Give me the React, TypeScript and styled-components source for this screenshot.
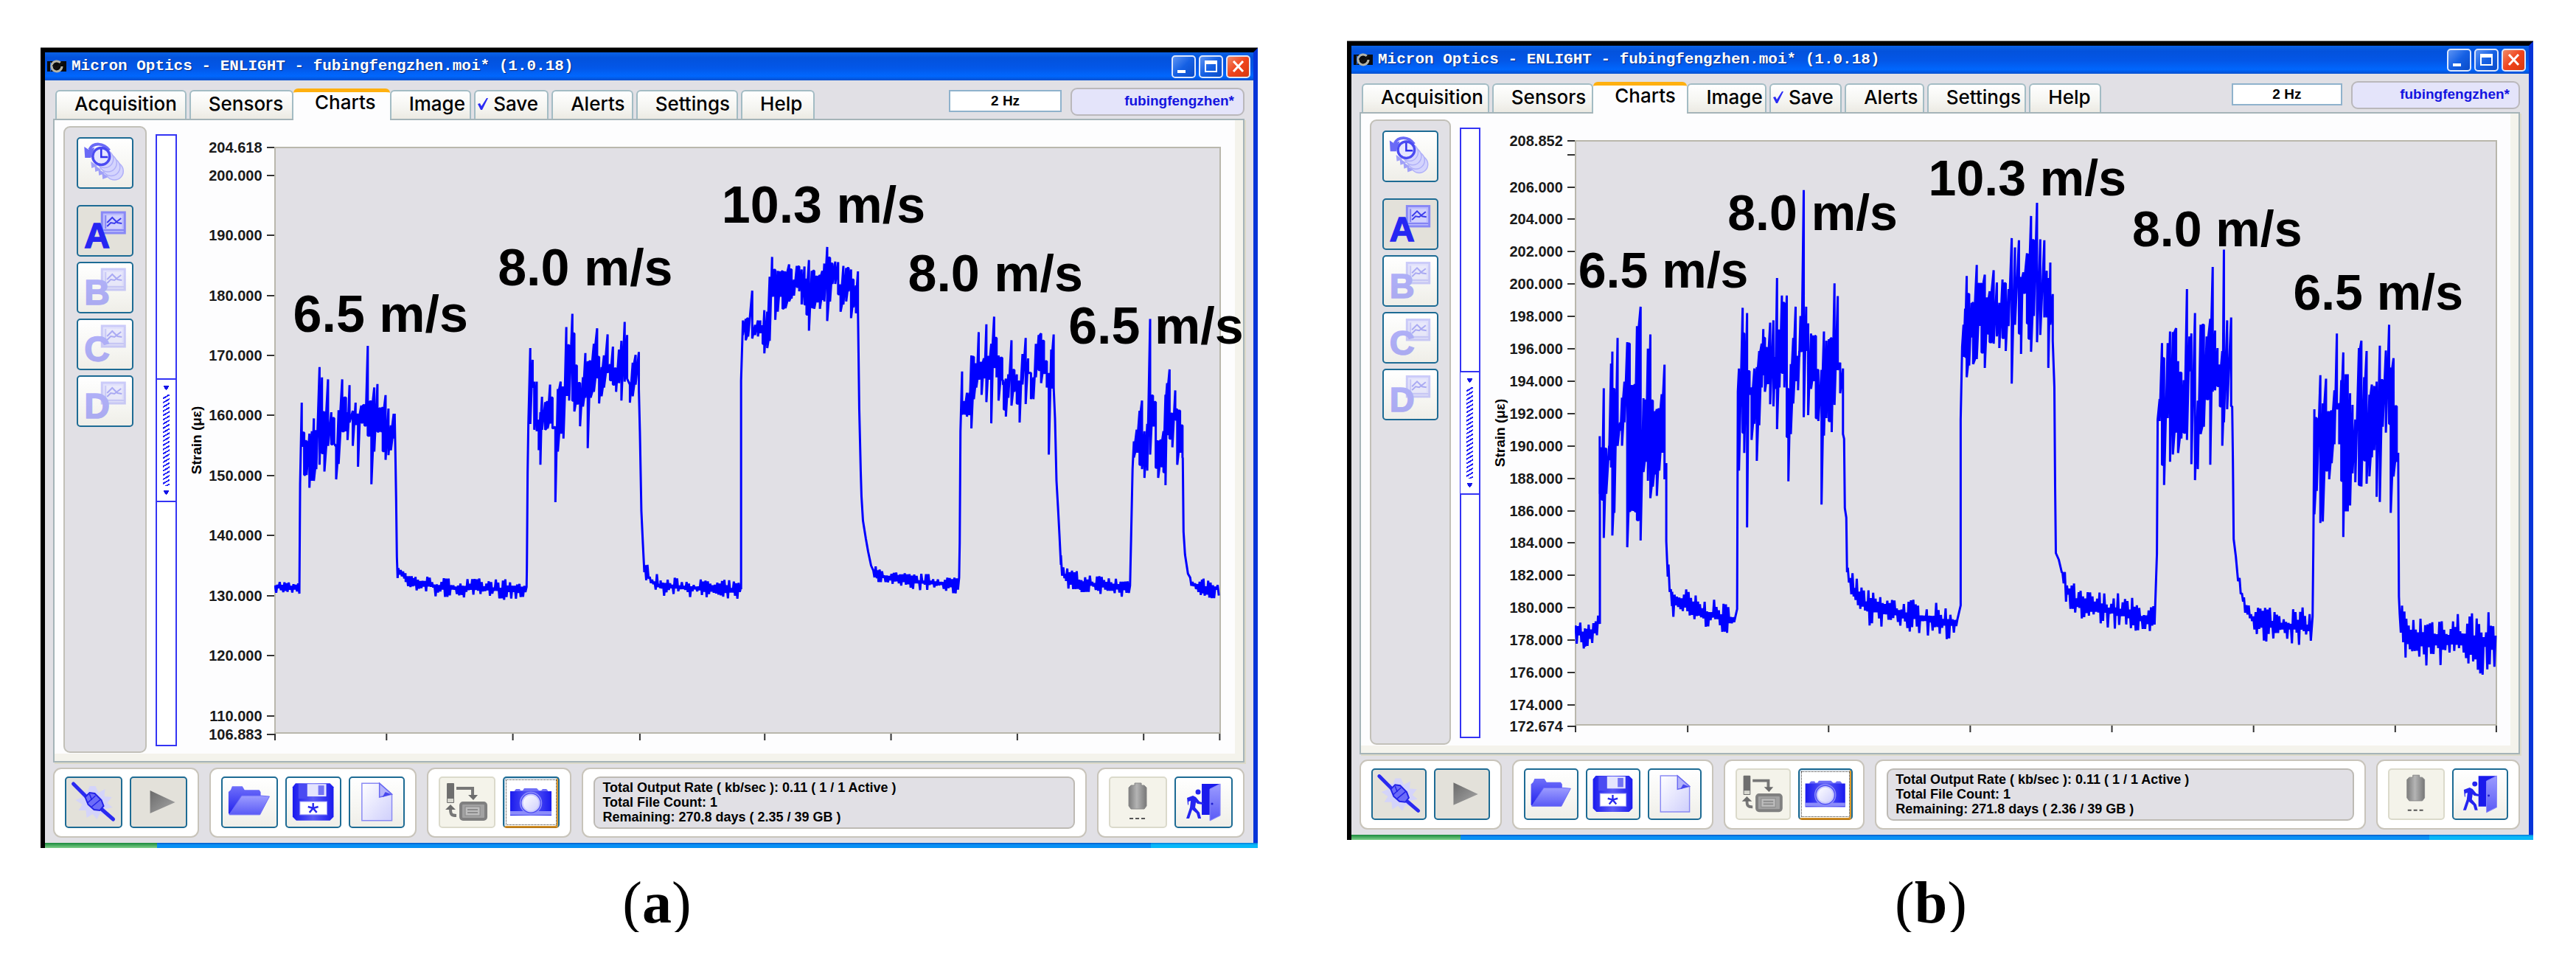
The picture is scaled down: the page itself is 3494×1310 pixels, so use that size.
import React from "react";
import styled, { createGlobalStyle, css } from "styled-components";

/* ---------- trace data ---------- */

type Knot = [number, number, number?];
type Piece =
  | { kind: "line"; at: Knot[] }
  | { kind: "drift"; at: Knot[] }
  | { kind: "burst"; origin: [number, number]; scale: [number, number]; cols: string };

const S = 1.823;
const V = 2.529;

const traceA: Piece[] = [
  { kind: "drift", at: [[373, 794, 6], [390, 796, 6], [407, 798, 5]] },
  { kind: "line", at: [[407, 655]] },
  {
    kind: "burst", origin: [40, 50], scale: [S, V],
    cols: "673 1252 1400,679 1355 1500,685 1384 1500,692 1358 1544,698 1350 1520,703 1306 1520,709 1350 1480,717 1130 1465,723 1165 1425,729 1285 1488,738 1172 1400,746 1285 1395,753 1305 1395,758 1400 1515,764 1278 1462,773 1172 1350,782 1235 1350,786 1285 1380,791 1192 1320,799 1280 1400,806 1252 1325,812 1293 1472,820 1262 1320,828 1260 1330,836 1057 1365,845 1248 1532,852 1200 1420,860 1188 1352,868 1272 1350,873 1268 1418,880 1226 1448,887 1272 1432,893 1330 1415,900 1290 1375",
  },
  { kind: "line", at: [[535, 560], [536, 615], [537, 676], [538, 754], [539, 783]] },
  { kind: "drift", at: [[540, 772, 8], [550, 782, 7], [560, 788, 7], [600, 796, 9], [714, 799, 9]] },
  { kind: "line", at: [[714, 770], [715, 640], [716, 575]] },
  {
    kind: "burst", origin: [40, 50], scale: [S, V],
    cols: "1237 1065 1325,1243 1105 1200,1247 1180 1345,1253 1180 1350,1258 1310 1415,1262 1285 1465,1266 1232 1345,1274 1250 1345,1280 1250 1340,1286 1190 1320,1292 1235 1340,1299 1335 1593,1305 1205 1420,1312 1180 1355,1319 1200 1375,1326 993 1225,1333 1055 1245,1341 947 1245,1346 1015 1282,1352 1125 1255,1360 1185 1333,1367 1165 1265,1373 1082 1235,1379 1110 1408,1386 1110 1235,1394 1050 1215,1402 997 1165,1407 1095 1255,1413 1130 1230,1419 1090 1200,1428 1018 1150,1434 1120 1175,1441 1060 1190,1449 1135 1215,1456 1070 1185,1462 1040 1245,1470 975 1180,1476 1020 1170,1483 1190 1252,1490 1115 1230,1497 1088 1190,1505 1078 1205",
  },
  { kind: "line", at: [[867, 584], [869, 692], [871, 735], [873, 775]] },
  { kind: "drift", at: [[874, 773, 9], [882, 787, 11], [895, 794, 8], [1004, 799, 8]] },
  { kind: "line", at: [[1004, 798], [1004, 515], [1006, 450]] },
  {
    kind: "burst", origin: [860, 50], scale: [S, V],
    cols: "267 970 1020,274 965 1038,280 962 1025,290 868 1032,297 985 1020,304 970 1025,310 970 1010,316 990 1050,320 935 1083,327 940 1065,333 820 1040,339 752 885,347 797 968,353 800 940,359 805 885,365 800 930,372 805 928,381 778 905,387 795 895,393 830 885,400 783 855,406 785 870,412 795 915,419 785 915,424 830 950,430 763 1005,437 800 925,443 800 930,450 820 905,457 815 930,463 800 900,468 775 905,475 718 972,482 755 905,488 775 845,495 768 845,502 770 880,508 850 940,515 783 915,522 790 905,528 790 870,534 795 962,540 830 925,546 850 945,551 802 930",
  },
  { kind: "line", at: [[1164, 554], [1166, 639], [1167, 672], [1169, 705], [1173, 730], [1176, 747], [1180, 766]] },
  { kind: "drift", at: [[1183, 775, 5], [1190, 779, 8], [1216, 786, 7], [1300, 792, 8]] },
  { kind: "line", at: [[1300, 735], [1301, 584]] },
  {
    kind: "burst", origin: [860, 50], scale: [S, V],
    cols: "808 1145 1290,814 1250 1290,820 1218 1300,826 1218 1295,831 1090 1340,837 1095 1240,843 1120 1200,849 1010 1170,856 1115 1225,862 1100 1165,868 983 1250,874 1095 1170,880 1050 1323,887 957 1130,893 1030 1165,898 1090 1245,907 1098 1175,911 1190 1275,916 1170 1300,922 1155 1235,930 1038 1262,937 1140 1215,943 1155 1255,950 1180 1320,957 1085 1190,965 1030 1257,971 1100 1150,978 1150 1240,984 1165 1240,990 1050 1165,997 1020 1140,1003 1015 1185,1010 1040 1150,1017 1110 1200,1022 1150 1430,1028 1070 1200,1034 1018 1200",
  },
  { kind: "line", at: [[1429, 566], [1431, 651], [1433, 686], [1435, 724], [1437, 765]] },
  { kind: "drift", at: [[1437, 764, 9], [1444, 783, 10], [1465, 790, 9], [1531, 796, 9]] },
  { kind: "line", at: [[1532, 730], [1534, 635]] },
  {
    kind: "burst", origin: [860, 50], scale: [S, V],
    cols: "1232 1385 1440,1239 1345 1420,1246 1280 1465,1252 1245 1480,1258 1350 1510,1265 1325 1485,1272 965 1430,1279 1228 1330,1286 1250 1475,1292 1385 1510,1299 1380 1470,1305 1350 1490,1310 1225 1535,1314 1185 1360,1320 1138 1375,1327 1290 1405,1334 1210 1310,1339 1275 1465,1346 1280 1420,1352 1330 1440",
  },
  { kind: "line", at: [[1602, 620], [1603, 720], [1605, 751], [1609, 777]] },
  { kind: "drift", at: [[1612, 790, 6], [1630, 797, 10], [1652, 796, 8]] },
];

const traceB: Piece[] = [
  { kind: "drift", at: [[2137, 850, 14], [2150, 866, 13], [2169, 850, 12]] },
  { kind: "line", at: [[2170, 845], [2170, 700]] },
  {
    kind: "burst", origin: [1810, 40], scale: [S, V],
    cols: "656 1392 1590,661 1430 1610,666 1228 1741,672 1435 1590,679 1425 1475,684 1143 1500,687 1102 1733,692 1230 1655,700 1055 1425,706 1345 1370,711 1260 1425,717 1205 1345,724 1070 1773,730 1075 1650,737 1220 1645,743 1215 1650,748 1015 1680,757 948 1750,764 1262 1515,770 1270 1480,775 1092 1545,781 1043 1605,787 1270 1565,793 1310 1520,797 1300 1597,803 1300 1510,809 1248 1445,816 1147 1540",
  },
  { kind: "line", at: [[2260, 627], [2260, 733], [2262, 781]] },
  { kind: "drift", at: [[2263, 790, 18], [2268, 815, 14], [2287, 818, 14], [2304, 829, 13], [2353, 840, 14]] },
  { kind: "line", at: [[2356, 825], [2357, 530]] },
  {
    kind: "burst", origin: [1810, 40], scale: [S, V],
    cols: "1000 1160 1510,1009 952 1380,1013 1040 1450,1020 970 1705,1026 1170 1250,1031 1225 1405,1038 1160 1350,1044 1155 1477,1050 1100 1355,1056 1075 1225,1060 1025 1180,1064 1055 1240,1070 1090 1210,1077 1003 1283,1085 995 1290,1090 1120 1230,1094 850 1368,1100 1030 1225,1106 910 1175,1112 935 1225,1118 910 1395,1122 1230 1547,1128 1145 1385,1134 1055 1280,1140 948 1200,1146 1120 1235,1152 980 1100,1160 548 1327,1166 948 1100,1171 1005 1320,1178 1040 1230,1184 1050 1200,1190 1048 1330,1196 1165 1340,1204 1165 1627,1210 1033 1390,1216 1065 1330,1222 1060 1340,1229 1055 1378,1236 868 1285,1244 912 1165,1250 1140 1245,1257 1160 1385",
  },
  { kind: "line", at: [[2501, 594], [2502, 688], [2504, 701], [2505, 775]] },
  { kind: "drift", at: [[2506, 779, 9], [2515, 802, 16], [2534, 823, 15], [2605, 837, 15], [2656, 845, 15]] },
  { kind: "line", at: [[2659, 820], [2659, 568], [2661, 469]] },
  {
    kind: "burst", origin: [2640, 40], scale: [1.836, V],
    cols: "42 1010 1120,46 955 1120,50 843 1190,56 905 1150,62 935 1050,66 935 1145,75 805 1128,82 870 1010,87 870 1105,95 838 1158,102 920 1040,107 895 1070,117 823 1075,125 865 1050,131 935 1090,139 855 1055,147 868 1100,154 888 1015,162 713 1212,170 745 1010,180 720 1040,185 850 1110,191 830 900,200 765 1005,204 770 1058,210 637 1103,217 720 980,225 592 1070,233 717 1045,243 720 985,249 825 985,253 850 1158,258 797 1010,264 905 1065",
  },
  { kind: "line", at: [[2786, 524], [2787, 657], [2788, 749], [2792, 758], [2796, 775]] },
  { kind: "drift", at: [[2797, 779, 6], [2803, 800, 14], [2820, 820, 14], [2869, 828, 17], [2923, 843, 15]] },
  { kind: "line", at: [[2925, 750], [2926, 568]] },
  {
    kind: "burst", origin: [2640, 40], scale: [1.836, V],
    cols: "530 1265 1340,536 1073 1490,541 1125 1560,550 1073 1330,556 1033 1480,563 1035 1455,571 1022 1380,576 1135 1450,584 1175 1400,590 1200 1380,598 888 1405,604 1050 1170,609 1040 1488,618 970 1543,625 1270 1505,632 1010 1385,640 1010 1360,647 1050 1265,656 990 1490,662 812 1240,668 1030 1235,674 1090 1220,680 1150 1290,686 1100 1425,690 752 1345,698 995 1300,708 985 1290",
  },
  { kind: "line", at: [[3027, 550], [3028, 625], [3029, 730], [3032, 754], [3035, 787]] },
  { kind: "drift", at: [[3037, 795, 8], [3043, 817, 12], [3054, 838, 15], [3092, 848, 19], [3134, 850, 16]] },
  { kind: "line", at: [[3136, 835], [3137, 741]] },
  {
    kind: "burst", origin: [2640, 40], scale: [1.836, V],
    cols: "915 1300 1660,921 1330 1580,930 1183 1690,936 1280 1685,944 1195 1510,952 1310 1540,958 1305 1485,965 1235 1420,971 1040 1300,977 1280 1420,982 1200 1545,987 1105 1738,993 1180 1650,998 1180 1650,1004 1245 1630,1010 1285 1520,1017 1335 1550,1026 1090 1560,1032 1065 1565,1039 1190 1475,1045 1100 1555,1052 1250 1530,1058 1215 1465,1064 1220 1440,1070 1205 1600,1078 1082 1618,1085 1200 1360,1093 1098 1380,1101 1010 1350,1105 1160 1655,1112 1125 1530,1120 1290 1480",
  },
  { kind: "line", at: [[3252, 613], [3253, 808]] },
  { kind: "drift", at: [[3254, 835, 20], [3263, 865, 22], [3320, 866, 27], [3385, 870, 29]] },
];

function tracePoints(pieces: Piece[]): string {
  let seed = 7;
  const rand = () => {
    seed = (seed * 16807) % 2147483647;
    return seed / 2147483647;
  };
  const out: string[] = [];
  const push = (x: number, y: number) => out.push(`${x.toFixed(1)},${y.toFixed(1)}`);

  for (const piece of pieces) {
    if (piece.kind === "line") {
      piece.at.forEach(([x, y]) => push(x, y));
    } else if (piece.kind === "drift") {
      let up = true;
      for (let i = 0; i < piece.at.length - 1; i++) {
        const [x0, y0, a0 = 6] = piece.at[i];
        const [x1, y1, a1 = 6] = piece.at[i + 1];
        for (let x = x0; x < x1; x += 1.6) {
          const t = (x - x0) / (x1 - x0);
          const amp = (a0 + (a1 - a0) * t) * (0.2 + 1.4 * Math.pow(rand(), 1.5));
          push(x, y0 + (y1 - y0) * t + (up ? -amp : amp));
          up = !up;
        }
      }
    } else {
      const [ox, oy] = piece.origin;
      const [sx, sy] = piece.scale;
      const cols = piece.cols.split(",").map((c) => c.split(" ").map(Number));
      cols.forEach(([x, top, bottom], i) => {
        const px = ox + x / sx;
        push(px, oy + top / sy);
        push(px, oy + bottom / sy);
        const next = cols[i + 1];
        if (next && rand() < 0.6) {
          const mid = ox + (x + next[0]) / 2 / sx;
          const hi = oy + Math.max(top, next[1]) / sy;
          const lo = oy + Math.min(bottom, next[2]) / sy;
          push(mid, lo);
          push(mid, hi);
        }
      });
    }
  }
  return out.join(" ");
}

/* ---------- screens ---------- */

interface Screen {
  caption: string;
  view: [number, number, number, number];
  trace: Piece[];
  range: [number, number];
  ticks: { value: number; label?: string }[];
  xTicks: number[];
  notes: { text: string; x: number; y: number }[];
  noteSize: number;
  remaining: string;
}

const tick = (value: number) => ({ value, label: value.toFixed(3) });

const screens: Screen[] = [
  {
    caption: "a",
    view: [372, 198, 1282, 796],
    trace: traceA,
    range: [106.883, 204.618],
    ticks: [204.618, 200, 190, 180, 170, 160, 150, 140, 130, 120, 110, 106.883].map(tick),
    xTicks: [373, 524, 695, 867, 1036, 1207, 1378, 1549, 1652],
    notes: [
      { text: "6.5 m/s", x: 396, y: 426 },
      { text: "8.0 m/s", x: 674, y: 363 },
      { text: "10.3 m/s", x: 978, y: 277 },
      { text: "8.0 m/s", x: 1231, y: 371 },
      { text: "6.5 m/s", x: 1449, y: 442 },
    ],
    noteSize: 70,
    remaining: "Remaining: 270.8 days ( 2.35 / 39 GB )",
  },
  {
    caption: "b",
    view: [2136, 189, 1250, 794],
    trace: traceB,
    range: [172.674, 208.852],
    ticks: [
      tick(208.852),
      { value: 208 },
      ...[206, 204, 202, 200, 198, 196, 194, 192, 190, 188, 186, 184, 182, 180, 178, 176, 174, 172.674].map(tick),
    ],
    xTicks: [2137, 2289, 2480, 2672, 2864, 3056, 3248, 3385],
    notes: [
      { text: "6.5 m/s", x: 2139, y: 366 },
      { text: "8.0 m/s", x: 2342, y: 287 },
      { text: "10.3 m/s", x: 2615, y: 240 },
      { text: "8.0 m/s", x: 2892, y: 310 },
      { text: "6.5 m/s", x: 3111, y: 396 },
    ],
    noteSize: 68,
    remaining: "Remaining: 271.8 days ( 2.36 / 39 GB )",
  },
];

const tabs = [
  { name: "Acquisition", size: 180 },
  { name: "Sensors", size: 142 },
  { name: "Charts", size: 130, active: true },
  { name: "Image", size: 110 },
  { name: "Save", size: 100, checked: true },
  { name: "Alerts", size: 110 },
  { name: "Settings", size: 139 },
  { name: "Help", size: 99 },
];

/* ---------- styles ---------- */

const GlobalStyle = createGlobalStyle`
  * { box-sizing: border-box; }
  body { margin: 0; background: #fff; color: #000; font-family: "Liberation Sans", Arial, sans-serif; }
  button, input { font: inherit; color: inherit; margin: 0; }
`;

const Figures = styled.main`
  display: grid;
  grid-template-columns: 1651fr 1609fr;
  column-gap: 121px;
  align-items: start;
  padding: 64px 58px 0 55px;
`;

const WindowFrame = styled.section<{ $raised: boolean }>`
  display: flex;
  flex-direction: column;
  margin-top: ${(p) => (p.$raised ? "-9px" : "0")};
  border-top: 1px solid #8a8a8a;
  min-width: 0;
`;

const WindowBody = styled.div`
  border-style: solid;
  border-width: 6px 6px 0 6px;
  border-color: #000 #0634d8 #000 #000;
  background: #e1e0e5;
`;

const TitleBar = styled.header`
  display: flex;
  align-items: center;
  height: 38px;
  padding: 0 4px 0 3px;
  background: linear-gradient(#0a62e6, #0352dc 20%, #0357e8 55%, #0067fe 85%, #0450d0);
`;

const TitleText = styled.h1`
  flex: 1;
  margin: 0 0 0 7px;
  font: bold 21px/30px "Liberation Mono", monospace;
  color: #fff;
  text-shadow: 1px 1px 1px #0a2a80;
  white-space: pre;
`;

const CaptionButton = styled.button<{ $close?: boolean }>`
  width: 33px;
  height: 31px;
  margin-left: 4px;
  padding: 0;
  border: 2px solid #dfe8fb;
  border-radius: 5px;
  background: ${(p) =>
    p.$close
      ? "linear-gradient(135deg, #f08a68, #f0441c 50%, #d83a10)"
      : "linear-gradient(135deg, #5d94f4, #1560e4 50%, #0b4cc8)"};
  svg { display: block; width: 100%; height: 100%; }
`;

const Content = styled.div`
  display: flex;
  flex-direction: column;
  padding: 10px 12px 7px 11px;
`;

const TopRow = styled.div`
  display: grid;
  grid-template-columns: 1032fr 158fr 154fr 236fr;
  column-gap: 12px;
  align-items: start;
  padding-left: 3px;
`;

const TabStrip = styled.div`
  display: flex;
  gap: 4px;
  align-items: flex-end;
  height: 42px;
`;

const Tab = styled.button<{ $active?: boolean; $size: number }>`
  display: grid;
  grid-template-columns: 23px auto;
  align-items: center;
  justify-content: start;
  flex: ${(p) => p.$size} 1 0;
  min-width: 0;
  height: 39px;
  padding: 0 0 4px 1px;
  border: 2px solid #a3bcc4;
  border-bottom: 0;
  border-radius: 6px 6px 0 0;
  background: linear-gradient(#fff, #f5f5f1 60%, #eceae3);
  font: 500 26px/28px Inter, "Liberation Sans", sans-serif;
  text-align: left;
  white-space: nowrap;
  ${(p) =>
    p.$active &&
    css`
      height: 43px;
      margin: 0 -4px -2px;
      padding-left: 6px;
      padding-bottom: 10px;
      z-index: 1;
      border: 0;
      border-top: 5px solid #ffb010;
      background: #fdfdfe;
    `}
`;

const RateField = styled.input`
  grid-column: 3;
  width: 100%;
  min-width: 0;
  height: 30px;
  margin-top: 3px;
  padding: 0;
  border: 2px solid #8fb2cc;
  background: #fff;
  font-size: 19px;
  font-weight: bold;
  text-align: center;
`;

const UserField = styled.output`
  height: 38px;
  padding: 0 12px;
  border: 2px solid #bab8bb;
  border-radius: 9px;
  background: #e4e4fa;
  color: #1414e0;
  font-weight: bold;
  font-size: 19px;
  line-height: 32px;
  text-align: right;
`;

const Panel = styled.div`
  display: grid;
  grid-template-columns: 12fr 113fr 12fr 29fr 131fr 1282fr 30fr;
  border: 2px solid #a5b4b8;
  background: #fdfdfe;
  box-shadow: inset -11px -10px 0 #f4f3ec, 2px 2px 0 #dcdac9;
`;

const SideBar = styled.div`
  grid-column: 2;
  display: flex;
  flex-direction: column;
  align-items: center;
  gap: 7px;
  margin: 8px 0 11px;
  padding: 13px 0;
  border: 2px solid #c2c0b8;
  border-radius: 9px;
  background: #e1e0e5;
`;

const ToolButton = styled.button<{ $look?: "pressed" | "disabled" | "focused"; $side?: boolean }>`
  ${(p) => (p.$side ? "width: 71%;" : "flex: 1 1 0; min-width: 0;")}
  height: 70px;
  padding: 0;
  border: 2px solid #1d6b94;
  border-radius: 5px;
  background: linear-gradient(#fff, #f6f6f2 60%, #efeee8);
  svg { display: block; width: calc(100% + 4px); height: 70px; margin: -2px; }
  ${(p) => p.$look === "pressed" && css`background: #e3e1da;`}
  ${(p) => p.$look === "disabled" && css`background: #f4f3ea; border-color: #dbdacb;`}
  ${(p) =>
    p.$look === "focused" &&
    css`
      background: #fff;
      border-bottom-color: #b97a1a;
      box-shadow: inset -2px -1px 0 #e09a2a, inset 1px 1px 0 #b8cfe0;
      outline: 1px dotted #333;
      outline-offset: -5px;
    `}
`;

const ClockSlot = styled.div`
  display: flex;
  justify-content: center;
  width: 100%;
  padding-bottom: 15px;
`;

const SliderCell = styled.label`
  grid-column: 4;
  display: block;
  contain: size;
  margin: 19px 0 20px;
  border: 2px solid #3434f4;
  background: #fff;
`;

const Slider = styled.input`
  display: block;
  appearance: none;
  writing-mode: vertical-lr;
  width: 100%;
  height: 100%;
  background: transparent;
  &::-webkit-slider-thumb {
    appearance: none;
    box-sizing: border-box;
    width: 25px;
    height: 168px;
    border: solid #3434f4;
    border-width: 2px 0;
    background:
      conic-gradient(from -40deg at 50% 100%, #1414e8 80deg, transparent 0) 50% 150px / 7px 6px no-repeat,
      conic-gradient(from -40deg at 50% 100%, #1414e8 80deg, transparent 0) 50% 8px / 7px 6px no-repeat,
      linear-gradient(#fff, #fff) 50% 0 / 25px 20px no-repeat,
      linear-gradient(#fff, #fff) 50% 100% / 25px 20px no-repeat,
      linear-gradient(90deg, #fff 8px, transparent 8px, transparent 17px, #fff 17px),
      repeating-linear-gradient(150deg, #2222f8 0 2px, #fff 2px 5px);
  }
`;

const AxisColumn = styled.div<{ $height: number }>`
  grid-column: 5;
  position: relative;
  height: ${(p) => p.$height}px;
  margin: 36px 0 37px;
`;

const TickRow = styled.div`
  position: absolute;
  right: 0;
  display: flex;
  align-items: center;
  gap: 6px;
  height: 24px;
  margin-top: -11px;
  font-size: 20px;
  line-height: 24px;
  font-weight: bold;
  color: #1a1a1a;
  &::after {
    content: "";
    width: 10px;
    height: 2px;
    background: #333;
  }
`;

const AxisTitle = styled.div`
  position: absolute;
  left: 17px;
  top: 50%;
  font-size: 19px;
  line-height: 20px;
  font-weight: bold;
  writing-mode: vertical-rl;
  transform: rotate(180deg) translateY(50%);
  white-space: nowrap;
`;

const Plot = styled.div<{ $height: number }>`
  grid-column: 6;
  position: relative;
  height: ${(p) => p.$height}px;
  margin: 36px 0 37px;
  background: #e1e0e5;
  border: solid #b9b7ac;
  border-width: 2px;
  svg { position: absolute; inset: -2px; width: calc(100% + 4px); height: calc(100% + 14px); }
`;

const Note = styled.span<{ $size: number }>`
  position: absolute;
  height: 80px;
  margin-top: -42px;
  font-size: ${(p) => p.$size}px;
  line-height: 80px;
  font-weight: bold;
  white-space: nowrap;
`;

const BottomRow = styled.footer`
  display: grid;
  grid-template-columns: 198fr 281fr 196fr 684fr 200fr;
  column-gap: 14px;
  margin-top: 7px;
`;

const Group = styled.div`
  display: flex;
  gap: 10px;
  height: 95px;
  min-width: 0;
  padding: 10px 14px;
  border: 2px solid #c8c4ba;
  border-radius: 11px;
  background: #fff;
`;

const Status = styled.div`
  flex: 1;
  padding: 3px 10px;
  border: 2px solid #bdbab4;
  border-radius: 9px;
  background: #e1e0e5;
  font-size: 18px;
  line-height: 20px;
  font-weight: bold;
  white-space: nowrap;
  p { margin: 0; }
`;

const TaskEdge = styled.div`
  display: grid;
  grid-template-columns: 152fr 1347fr 145fr;
  height: 7px;
  padding-left: 6px;
  background: #000;
  i:nth-child(1) { background: linear-gradient(#1a8a3c, #7fd08a); }
  i:nth-child(2) { background: linear-gradient(#0458c8, #0890f4 40%); }
  i:nth-child(3) { background: linear-gradient(#0878d8, #08b8f8 40%); }
`;

const Captions = styled.div`
  display: grid;
  grid-template-columns: 1fr 1fr;
  padding: 34px 11px 0 27px;
  font: 80px/80px "Liberation Serif", serif;
  text-align: center;
`;

/* ---------- icons ---------- */

const Icon = ({ children }: { children: React.ReactNode }) => (
  <svg viewBox="0 0 77 70" aria-hidden="true">{children}</svg>
);

const Gradients = () => (
  <svg width="0" height="0" style={{ position: "absolute" }} aria-hidden="true">
    <defs>
      <linearGradient id="deep" x1="0" y1="0" x2="0" y2="1"><stop offset="0" stopColor="#7070fa" /><stop offset="1" stopColor="#2020ee" /></linearGradient>
      <linearGradient id="soft" x1="0" y1="0" x2="0" y2="1"><stop offset="0" stopColor="#9c9cff" /><stop offset="1" stopColor="#5a5af6" /></linearGradient>
      <linearGradient id="pale" x1="0" y1="0" x2="1" y2="1"><stop offset="0" stopColor="#ffffff" /><stop offset="1" stopColor="#cfcffc" /></linearGradient>
      <linearGradient id="side" x1="0" y1="0" x2="1" y2="0"><stop offset="0" stopColor="#1a1aee" /><stop offset="0.5" stopColor="#5c5cf6" /><stop offset="1" stopColor="#1a1aee" /></linearGradient>
      <linearGradient id="metal" x1="0" y1="0" x2="1" y2="0"><stop offset="0" stopColor="#7c7c7c" /><stop offset="0.45" stopColor="#b4b4b4" /><stop offset="1" stopColor="#777" /></linearGradient>
      <linearGradient id="steel" x1="0" y1="0" x2="1" y2="1"><stop offset="0" stopColor="#6a6a6a" /><stop offset="1" stopColor="#a8a8a8" /></linearGradient>
    </defs>
  </svg>
);

const ClockIcon = () => (
  <Icon>
    {[4, 3, 2, 1].map((n) => (
      <g key={n}>
        <path d={`M${14 + n * 5} ${28 + n * 5}l1 9l8 -3z`} fill="#a0a0f8" />
        <circle cx={33 + n * 4.5} cy={24 + n * 5.5} r="12" fill="#d4d4fd" stroke="#b0b0f8" strokeWidth="1.5" />
      </g>
    ))}
    <path d="M17 17C22 7 36 7 44 18" fill="none" stroke="#6a6af6" strokeWidth="4" />
    <circle cx="33" cy="26" r="11.5" fill="#e6e6fe" stroke="#4a4af2" strokeWidth="3.5" />
    <path d="M33 16v11h9" fill="none" stroke="#3030ee" strokeWidth="2.5" />
    <path d="M10 13l6 4l8-3l-5 14l-8 0z" fill="#6a6af6" />
  </Icon>
);

const ChartIcon = ({ letter, on }: { letter: string; on?: boolean }) => (
  <Icon>
    <g opacity={on ? 1 : 0.42}>
      <rect x="34" y="10" width="31" height="28" fill="#bcbcfc" stroke="#8888f6" strokeWidth="3" />
      <rect x="39" y="14" width="22" height="18" fill="#d0d0fd" />
      <path d="M39 14v18M36 34h28" stroke="#8484f4" strokeWidth="2" fill="none" />
      <path d="M41 24l7-7l7 7l6 1M41 29l5-5l5 1l9-7" fill="none" stroke="#3c3cec" strokeWidth="2" />
      <text x="10" y="58" fontFamily="Liberation Sans, Arial, sans-serif" fontWeight="bold" fontSize="48" stroke={on ? "#2626f2" : "#4a4af8"} strokeWidth="1.5" fill={on ? "#2626f2" : "#4a4af8"}>{letter}</text>
    </g>
  </Icon>
);

const ConnectIcon = () => (
  <Icon>
    <path d="M41 13l4 9l9-5l-1 10l10 1l-6 8l7 6l-10 2l2 9l-9-3l-4 8l-6-7l-8 5l-1-10l-10 0l5-8l-9-6l9-4l-3-9l10 2l3-8z" fill="#d4d4fa" />
    <path d="M11 10L30 29M50 45L65 58" stroke="#2a2af0" strokeWidth="5" strokeLinecap="round" />
    <path d="M27 28l6-6l7 1l9 9l3 8l-5 6l-8 -1l-8 -7z" fill="#6c6cf8" stroke="#2222e6" strokeWidth="2" />
    <path d="M30 36l11-10M36 41l12-10M33 24l3 8" stroke="#2222e6" strokeWidth="1.5" fill="none" />
  </Icon>
);

const PlayIcon = () => <Icon><path d="M27 19L61 35L27 50z" fill="url(#steel)" /></Icon>;

const FolderIcon = () => (
  <Icon>
    <path d="M10 21l3-3l2-5h14l3 5h20l2 3v8H28L12 52l-2-2z" fill="url(#deep)" />
    <path d="M28 26h27l11 1l-13 25H11z" fill="url(#soft)" stroke="#6a6af6" strokeWidth="1" />
  </Icon>
);

const FloppyIcon = () => (
  <Icon>
    <path d="M14 9h47l5 5v41l-5 5H15l-5-5V14z" fill="url(#side)" />
    <rect x="18" y="10" width="12" height="20" fill="#4a4af2" />
    <rect x="30" y="10" width="26" height="17" fill="#e4e4fd" />
    <rect x="45" y="12" width="8" height="13" fill="#7272f4" />
    <rect x="20" y="34" width="37" height="18" fill="#fff" stroke="#9a9af8" strokeWidth="1" />
    <path d="M38 36v7M38 43l7-2M38 43l-7-2M38 43l5 6M38 43l-5 6" stroke="#2a2af0" strokeWidth="2.5" />
  </Icon>
);

const PageIcon = () => (
  <Icon>
    <path d="M18 9h24l17 15v36H18z" fill="url(#pale)" stroke="#8a8af4" strokeWidth="1.5" />
    <path d="M42 9v19l17-4z" fill="#b4b4fa" stroke="#6a6af2" strokeWidth="1.5" />
    <path d="M46 28l12-4l-8-3z" fill="#4848ee" />
  </Icon>
);

const TransferIcon = () => (
  <Icon>
    <rect x="11" y="9" width="10" height="27" rx="1" fill="#6e6e6e" />
    <rect x="12" y="30" width="8" height="5" fill="#d8d8d0" />
    <path d="M24 16h22v10" fill="none" stroke="#777" strokeWidth="4" />
    <path d="M40 25h13l-6 7z" fill="#6c6c6c" />
    <path d="M24 53c-7 0-8-2-8-9" fill="none" stroke="#777" strokeWidth="4" />
    <path d="M9 45l7-7l7 7z" fill="#6c6c6c" />
    <rect x="30" y="36" width="34" height="22" rx="3" fill="#a2a2a2" stroke="#808080" strokeWidth="4" />
    <rect x="36" y="41" width="20" height="12" fill="#bdbdbd" stroke="#888" />
    <path d="M39 45h14M39 49h14" stroke="#8c8c8c" strokeWidth="2" />
  </Icon>
);

const CameraIcon = () => (
  <Icon>
    <path d="M16 19l2-2h5l1 2h3l2-3h17l3 3h3l2-2h5l2 2v2H16z" fill="#6e6ef6" />
    <rect x="10" y="20" width="56" height="33" fill="url(#side)" />
    <rect x="10" y="47" width="56" height="5" fill="#8c8cfa" />
    <circle cx="38" cy="36" r="14.5" fill="#4a4af2" stroke="#8c8cfb" strokeWidth="1.5" />
    <circle cx="38" cy="36" r="11.5" fill="url(#pale)" stroke="#c8c8fe" strokeWidth="2" />
  </Icon>
);

const BatteryIcon = () => (
  <Icon>
    <path d="M34 9h9v3h4l3 3v25l-3 4H29l-3-4V15l3-3h5z" fill="url(#metal)" stroke="#8a8a8a" strokeWidth="1" />
    <path d="M27 57h5M35 57h5M43 57h5" stroke="#555" strokeWidth="2" />
  </Icon>
);

const ExitIcon = () => (
  <Icon>
    <path d="M36 10h25v42H36z" fill="#1a1aec" />
    <path d="M47 17l14-7v43l-14 7z" fill="url(#soft)" stroke="#8a8afa" strokeWidth="1" />
    <circle cx="50" cy="37" r="1.5" fill="#2020d0" />
    <circle cx="31" cy="21" r="3.5" fill="#2424f0" />
    <path d="M17 38l-1-9l8-3l4 2l5 6l6 2l-1 2l-8-1l-2-2l-1 7l6 7l2 8h-4l-2-7l-6-5l-4 12h-4l5-15l1-9l-3 1v5z" fill="#2424f0" />
  </Icon>
);

const AppLogo = () => (
  <svg width="26" height="20" viewBox="0 0 26 20" aria-hidden="true">
    <path d="M0 3h26v14H0z" fill="#0a0a0a" />
    <path d="M4 4l4 3v6l-4 4z" fill="#1a66e4" />
    <path d="M18 5a7 7 0 1 0 2 5" fill="none" stroke="#b4b4a8" strokeWidth="3" />
    <path d="M8 8l4 5l9-9" fill="none" stroke="#111" strokeWidth="3" />
  </svg>
);

/* ---------- parts ---------- */

function Chart({ screen }: { screen: Screen }) {
  const [vx, vy, vw, vh] = screen.view;
  const [min, max] = screen.range;
  return (
    <>
      <AxisColumn $height={vh}>
        {screen.ticks.map((t) => (
          <TickRow key={t.value} style={{ top: `${((max - t.value) / (max - min)) * 100}%` }}>
            {t.label}
          </TickRow>
        ))}
        <AxisTitle>Strain (με)</AxisTitle>
      </AxisColumn>
      <Plot $height={vh}>
        <svg viewBox={`${vx} ${vy} ${vw} ${vh + 10}`} preserveAspectRatio="none" role="img" aria-label="Strain over time">
          <polyline points={tracePoints(screen.trace)} fill="none" stroke="#0000ff" strokeWidth="3" strokeLinejoin="bevel" />
          {screen.xTicks.map((x) => (
            <path key={x} d={`M${x} ${vy + vh}v9`} stroke="#333" strokeWidth="2" />
          ))}
        </svg>
        {screen.notes.map((n) => (
          <Note
            key={n.x}
            $size={screen.noteSize}
            style={{ left: `${((n.x - vx) / vw) * 100}%`, top: `${((n.y - vy) / vh) * 100}%` }}
          >
            {n.text}
          </Note>
        ))}
      </Plot>
    </>
  );
}

function EnlightWindow({ screen, raised }: { screen: Screen; raised: boolean }) {
  return (
    <WindowFrame $raised={raised}>
      <WindowBody>
        <TitleBar>
          <AppLogo />
          <TitleText>Micron Optics - ENLIGHT - fubingfengzhen.moi* (1.0.18)</TitleText>
          <CaptionButton aria-label="Minimize">
            <svg viewBox="0 0 29 27"><path d="M6 18h11v4H6z" fill="#fff" /></svg>
          </CaptionButton>
          <CaptionButton aria-label="Maximize">
            <svg viewBox="0 0 29 27"><path d="M6 5h17v16H6zM8 10v9h13v-9z" fill="#fff" fillRule="evenodd" /></svg>
          </CaptionButton>
          <CaptionButton aria-label="Close" $close>
            <svg viewBox="0 0 29 27"><path d="M8 6l13 14M21 6L8 20" stroke="#fff" strokeWidth="3" /></svg>
          </CaptionButton>
        </TitleBar>
        <Content>
          <TopRow>
            <TabStrip role="tablist">
              {tabs.map((t) => (
                <Tab key={t.name} role="tab" aria-selected={!!t.active} $active={t.active} $size={t.size}>
                  <svg width="17" height="18" viewBox="0 0 17 18" aria-hidden="true">
                    {t.checked && <path d="M2 9l3-1l2 4L14 1l2 0L8 17H6z" fill="#2a2af4" />}
                  </svg>
                  {t.name}
                </Tab>
              ))}
            </TabStrip>
            <RateField aria-label="Acquisition rate" readOnly value="2 Hz" />
            <UserField>fubingfengzhen*</UserField>
          </TopRow>
          <Panel>
            <SideBar>
              <ClockSlot>
                <ToolButton $side aria-label="History"><ClockIcon /></ToolButton>
              </ClockSlot>
              {["A", "B", "C", "D"].map((l) => (
                <ToolButton key={l} $side $look={l === "A" ? "pressed" : undefined} aria-label={`Chart ${l}`}>
                  <ChartIcon letter={l} on={l === "A"} />
                </ToolButton>
              ))}
            </SideBar>
            <SliderCell>
              <Slider type="range" defaultValue={50} aria-label="Strain range" />
            </SliderCell>
            <Chart screen={screen} />
          </Panel>
          <BottomRow>
            <Group>
              <ToolButton $look="pressed" aria-label="Connect"><ConnectIcon /></ToolButton>
              <ToolButton $look="pressed" aria-label="Play"><PlayIcon /></ToolButton>
            </Group>
            <Group>
              <ToolButton aria-label="Open"><FolderIcon /></ToolButton>
              <ToolButton aria-label="Save as"><FloppyIcon /></ToolButton>
              <ToolButton aria-label="New"><PageIcon /></ToolButton>
            </Group>
            <Group>
              <ToolButton $look="disabled" aria-label="Transfer"><TransferIcon /></ToolButton>
              <ToolButton $look="focused" aria-label="Snapshot"><CameraIcon /></ToolButton>
            </Group>
            <Group>
              <Status>
                <p>Total Output Rate ( kb/sec ): 0.11 ( 1 / 1 Active )</p>
                <p>Total File Count: 1</p>
                <p>{screen.remaining}</p>
              </Status>
            </Group>
            <Group>
              <ToolButton $look="disabled" aria-label="Battery"><BatteryIcon /></ToolButton>
              <ToolButton aria-label="Exit"><ExitIcon /></ToolButton>
            </Group>
          </BottomRow>
        </Content>
      </WindowBody>
      <TaskEdge><i /><i /><i /></TaskEdge>
    </WindowFrame>
  );
}

export default function App() {
  return (
    <>
      <GlobalStyle />
      <Gradients />
      <Figures>
        {screens.map((s, i) => (
          <EnlightWindow key={s.caption} screen={s} raised={i === 1} />
        ))}
      </Figures>
      <Captions>
        {screens.map((s) => (
          <div key={s.caption}>(<b>{s.caption}</b>)</div>
        ))}
      </Captions>
    </>
  );
}
